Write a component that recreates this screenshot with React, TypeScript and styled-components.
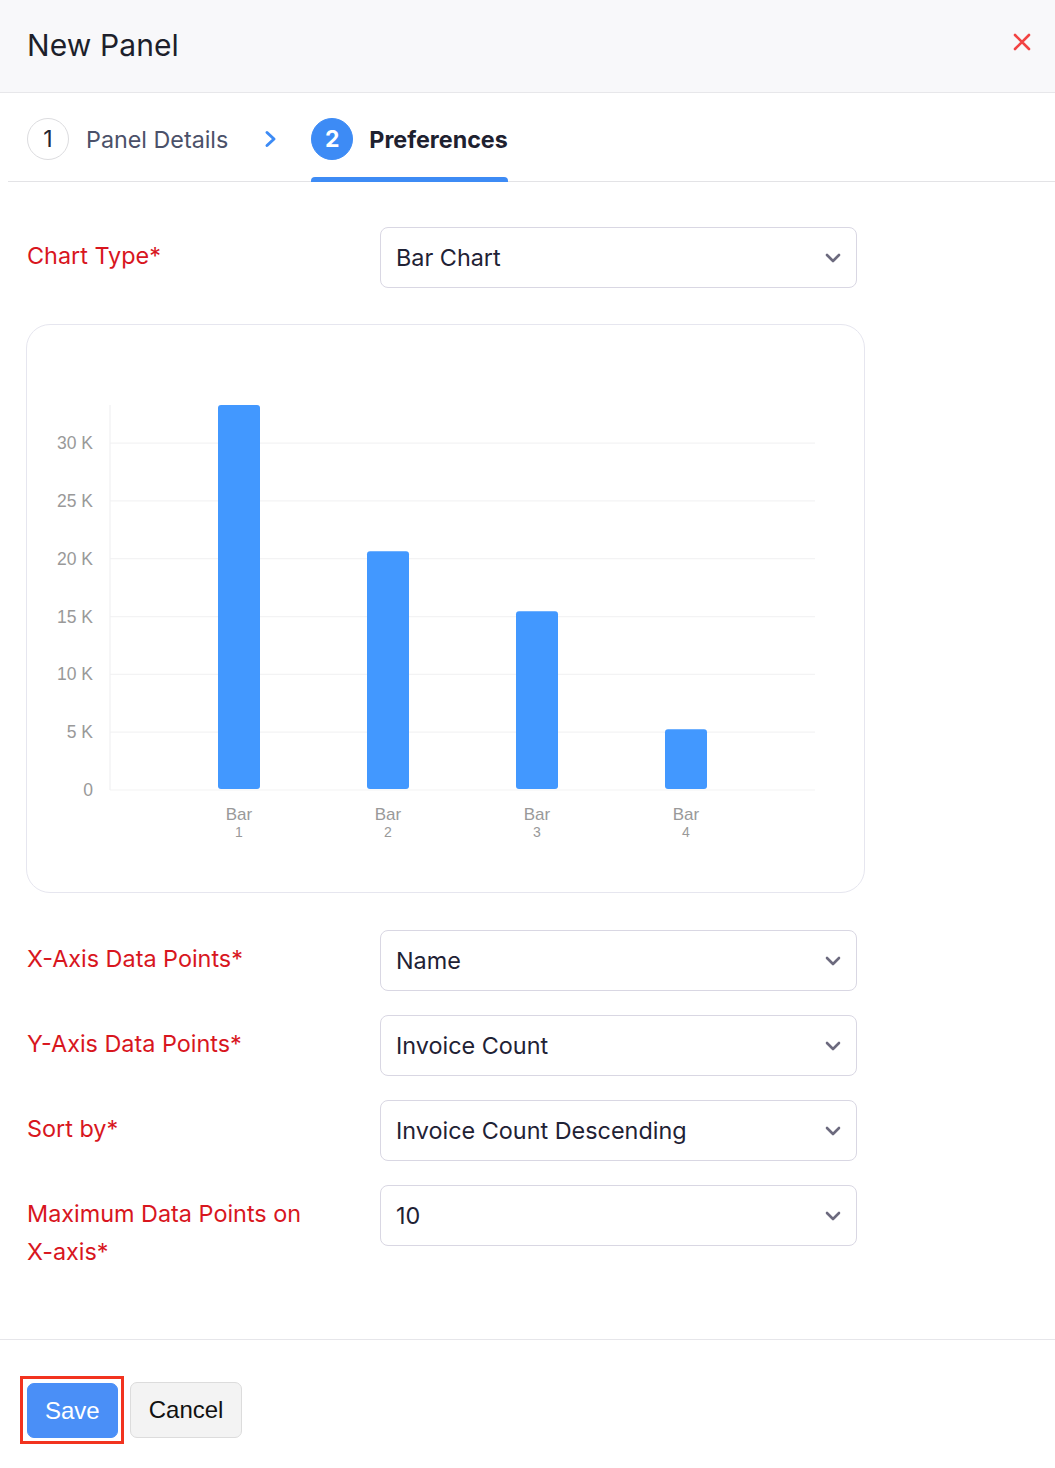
import React from 'react';
import styled, { createGlobalStyle } from 'styled-components';

const GlobalStyle = createGlobalStyle`
  body {
    margin: 0;
    background: #ffffff;
    font-family: Inter, "Noto Sans", "Liberation Sans", sans-serif;
    color: #1f2235;
  }
  * { box-sizing: border-box; }
`;

const Page = styled.div`
  width: 1055px;
  min-height: 1468px;
  background: #fff;
  display: flex;
  flex-direction: column;
`;

const Header = styled.header`
  height: 93px;
  background: #f8f8fa;
  border-bottom: 1px solid #e7e7ea;
  display: flex;
  align-items: center;
  justify-content: space-between;
  padding: 0 22px 0 27px;
`;

const Title = styled.h1`
  margin: 0 0 2px;
  font-size: 30px;
  font-weight: 400;
  color: #1d1f2b;
  letter-spacing: 0.1px;
`;

const CloseButton = styled.button`
  border: 0;
  background: transparent;
  padding: 0;
  width: 22px;
  height: 22px;
  display: flex;
  align-items: center;
  justify-content: center;
  margin-bottom: 8px;
  cursor: pointer;
`;

const Steps = styled.nav`
  margin-left: 8px;
  height: 89px;
  border-bottom: 1px solid #e3e3e6;
  display: flex;
  align-items: stretch;
  padding-left: 19px;
`;

const Step = styled.div<{ $active?: boolean }>`
  position: relative;
  display: flex;
  align-items: center;
  gap: ${(p) => (p.$active ? '16px' : '17px')};
  padding-top: 4px;
  &::after {
    content: '';
    display: ${(p) => (p.$active ? 'block' : 'none')};
    position: absolute;
    left: 0;
    right: 0;
    bottom: -1px;
    height: 5px;
    border-radius: 4px 4px 0 0;
    background: #3d8bf5;
  }
`;

const StepNumber = styled.span<{ $active?: boolean }>`
  width: 42px;
  height: 42px;
  border-radius: 50%;
  display: flex;
  align-items: center;
  justify-content: center;
  font-size: 23px;
  font-weight: ${(p) => (p.$active ? 700 : 400)};
  color: ${(p) => (p.$active ? '#fff' : '#222431')};
  background: ${(p) => (p.$active ? '#3d8bf5' : '#fff')};
  border: 1px solid ${(p) => (p.$active ? '#3d8bf5' : '#dcdcdf')};
`;

const StepLabel = styled.span<{ $active?: boolean }>`
  font-size: 23.3px;
  font-weight: ${(p) => (p.$active ? 700 : 400)};
  color: ${(p) => (p.$active ? '#1e2130' : '#4b5169')};
`;

const StepArrow = styled.span`
  display: flex;
  align-items: center;
  padding: 4px 34px 0 36px;
`;

const Body = styled.main`
  padding: 45px 27px 68px;
  display: flex;
  flex-direction: column;
`;

const FormRow = styled.div<{ $gap?: number }>`
  display: flex;
  align-items: flex-start;
  margin-bottom: ${(p) => p.$gap ?? 24}px;
`;

const Label = styled.label`
  width: 353px;
  padding: 10px 66px 0 0;
  font-size: 23.4px;
  line-height: 38px;
  color: #d8161e;
`;

const Select = styled.div`
  width: 477px;
  height: 61px;
  border: 1px solid #d9d7e3;
  border-radius: 8px;
  display: flex;
  align-items: center;
  justify-content: space-between;
  padding: 0 15px 0 15px;
  font-size: 23.4px;
  color: #1f2235;
  background: #fff;
`;

const ChartCard = styled.section`
  width: 839px;
  height: 569px;
  margin: 12px 0 37px -1px;
  border: 1px solid #e6e6ef;
  border-radius: 24px;
  overflow: hidden;
`;

const Footer = styled.footer`
  border-top: 1px solid #e6e6ea;
  padding: 36px 20px 0;
  display: flex;
  align-items: flex-start;
  gap: 6px;
`;

const Highlight = styled.div`
  border: 3px solid #f2331f;
  padding: 4px 3px 3px 4px;
  display: flex;
`;

const Button = styled.button<{ $primary?: boolean }>`
  height: ${(p) => (p.$primary ? '55px' : '56px')};
  margin-top: ${(p) => (p.$primary ? '0' : '6px')};
  padding: 0 ${(p) => (p.$primary ? '17px' : '18px')};
  border-radius: 7px;
  font-family: "Liberation Sans", Arial, sans-serif;
  font-size: 24px;
  color: ${(p) => (p.$primary ? '#fff' : '#111')};
  background: ${(p) => (p.$primary ? '#4a8ff7' : '#f3f3f3')};
  border: 1px solid ${(p) => (p.$primary ? '#4a8ff7' : '#dcdcdc')};
  cursor: pointer;
`;

const Chevron = () => (
  <svg width="16" height="10" viewBox="0 0 16 10">
    <polyline points="2,2 8,8 14,2" fill="none" stroke="#6c6a7e" strokeWidth="2.6" strokeLinecap="round" strokeLinejoin="round" />
  </svg>
);

const bars = [
  { name: '1', value: 33.3 },
  { name: '2', value: 20.65 },
  { name: '3', value: 15.45 },
  { name: '4', value: 5.25 },
];

const ticks = [0, 5, 10, 15, 20, 25, 30];

const BarChart = () => {
  const y0 = 465;
  const perK = 11.565;
  return (
    <svg width="837" height="567" viewBox="0 0 837 567" style={{ display: 'block' }}>
      <g fontFamily='"Liberation Sans", Arial, sans-serif' fill="#999">
        {ticks.map((t) => {
          const y = y0 - t * perK;
          return (
            <g key={t}>
              <line x1="83" x2="788" y1={y} y2={y} stroke="#f3f3f4" strokeWidth="1.2" />
              <text x="66" y={y + 6} fontSize="17.5" textAnchor="end">{t === 0 ? '0' : `${t} K`}</text>
            </g>
          );
        })}
        <line x1="83" x2="83" y1="80" y2={y0} stroke="#f0f0f2" strokeWidth="1.2" />
        {bars.map((b, i) => {
          const x = 191 + i * 149;
          const top = y0 - b.value * perK;
          return (
            <g key={b.name}>
              <rect x={x} y={top} width="42" height={y0 - top - 1} rx="3" fill="#4298ff" />
              <text x={x + 21} y="495" fontSize="17" textAnchor="middle">Bar</text>
              <text x={x + 21} y="512" fontSize="14" textAnchor="middle">{b.name}</text>
            </g>
          );
        })}
      </g>
    </svg>
  );
};

const rows = [
  { label: 'X-Axis Data Points*', value: 'Name' },
  { label: 'Y-Axis Data Points*', value: 'Invoice Count' },
  { label: 'Sort by*', value: 'Invoice Count Descending' },
  { label: 'Maximum Data Points on X-axis*', value: '10' },
];

export default function App() {
  return (
    <>
      <GlobalStyle />
      <Page>
        <Header>
          <Title>New Panel</Title>
          <CloseButton aria-label="Close">
            <svg width="18" height="18" viewBox="0 0 18 18">
              <path d="M2 2 L16 16 M16 2 L2 16" stroke="#f24343" strokeWidth="2.6" strokeLinecap="round" />
            </svg>
          </CloseButton>
        </Header>

        <Steps>
          <Step>
            <StepNumber>1</StepNumber>
            <StepLabel>Panel Details</StepLabel>
          </Step>
          <StepArrow>
            <svg width="13" height="18" viewBox="0 0 13 18">
              <polyline points="3,2.5 10,9 3,15.5" fill="none" stroke="#3d8bf5" strokeWidth="3" strokeLinecap="round" strokeLinejoin="round" />
            </svg>
          </StepArrow>
          <Step $active>
            <StepNumber $active>2</StepNumber>
            <StepLabel $active>Preferences</StepLabel>
          </Step>
        </Steps>

        <Body>
          <FormRow $gap={24}>
            <Label>Chart Type*</Label>
            <Select>
              <span>Bar Chart</span>
              <Chevron />
            </Select>
          </FormRow>

          <ChartCard>
            <BarChart />
          </ChartCard>

          {rows.map((r, i) => (
            <FormRow key={r.label} $gap={i === rows.length - 1 ? 0 : 24}>
              <Label>{r.label}</Label>
              <Select>
                <span>{r.value}</span>
                <Chevron />
              </Select>
            </FormRow>
          ))}
        </Body>

        <Footer>
          <Highlight>
            <Button $primary>Save</Button>
          </Highlight>
          <Button>Cancel</Button>
        </Footer>
      </Page>
    </>
  );
}
